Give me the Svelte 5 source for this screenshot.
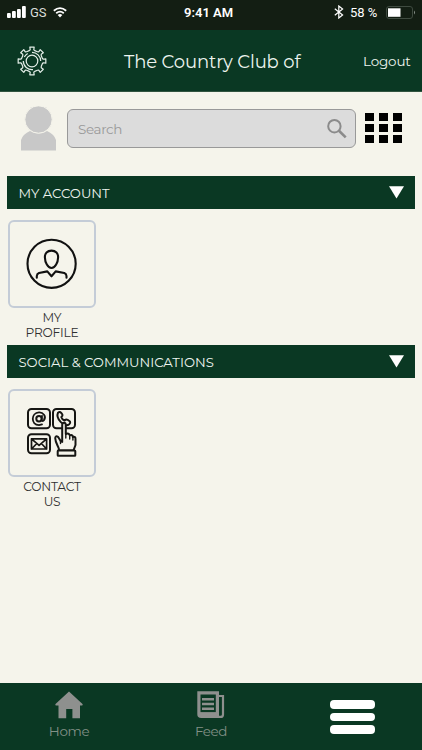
<script>
    let search = $state("");

    const sections = [
        { title: "MY ACCOUNT", item: ["MY", "PROFILE"], icon: "profile" },
        { title: "SOCIAL & COMMUNICATIONS", item: ["CONTACT", "US"], icon: "contact" }
    ];

    // outline of the gear: eight teeth around the centre
    function gearPath() {
        const points = [];
        for (let i = 0; i < 8; i++) {
            const mid = i * 45;
            for (const [offset, r] of [[-15, 10.7], [-9, 11.4], [-9, 14], [9, 14], [9, 11.4], [15, 10.7]]) {
                const a = ((mid + offset) * Math.PI) / 180;
                points.push((15 + r * Math.cos(a)).toFixed(2) + " " + (15 + r * Math.sin(a)).toFixed(2));
            }
        }
        return "M" + points.join("L") + "Z";
    }
</script>

<div class="app">
    <div class="status">
        <svg class="signal" width="19" height="12" viewBox="0 0 19 12" fill="#fff">
            <rect x="0" y="7" width="3.8" height="5" rx="1" />
            <rect x="5" y="5" width="3.8" height="7" rx="1" />
            <rect x="10" y="3" width="3.8" height="9" rx="1" />
            <rect x="15" y="0" width="3.8" height="12" rx="1" />
        </svg>
        <span class="carrier">GS</span>
        <svg class="wifi" width="14" height="11" viewBox="0 0 14 11" fill="none" stroke="#fff" stroke-width="1.8">
            <path d="M.8 3.7Q7 -1.5 13.2 3.7M3.2 6.2Q7 3 10.8 6.2" />
            <path d="M4.7 7.9Q7 6.2 9.3 7.9L7 10.5Z" fill="#fff" stroke="none" />
        </svg>
        <span class="time">9:41 AM</span>
        <svg class="bluetooth" width="10" height="14" viewBox="0 0 10 14" fill="none" stroke="#fff" stroke-width="1.2">
            <path d="M.8 3.8L8.6 10L4.8 13V1L8.6 4L.8 10.2" />
        </svg>
        <span class="percent">58 %</span>
        <svg class="battery" width="30" height="13" viewBox="0 0 30 13">
            <rect x=".5" y=".5" width="26" height="12" rx="2.5" fill="none" stroke="#3f4b40" />
            <rect x="2" y="2.3" width="12.5" height="8.5" fill="#fff" />
            <path d="M28 4.5Q30 6.5 28 8.5Z" fill="#89918a" />
        </svg>
    </div>

    <header>
        <svg class="gear" width="30" height="30" viewBox="0 0 30 30" fill="none" stroke="#e4eee8" stroke-width="1.2" stroke-linejoin="round">
            <path d={gearPath()} />
            <circle cx="15" cy="15" r="5.8" />
            <path d="M15 6.3A8.7 8.7 0 0 1 23.7 15M6.3 15A8.7 8.7 0 0 0 16 23.6M7.3 11A8.7 8.7 0 0 1 10.7 7.4" />
        </svg>
        <h1>The Country Club of</h1>
        <span class="logout">Logout</span>
    </header>

    <main>
        <div class="tools">
            <svg class="avatar" width="36" height="45" viewBox="0 0 36 45" fill="#c8c8c8">
                <path d="M0 44.5V34Q2 28 9 25Q18 30 26 25Q33 28 35 34V44.5Z" />
                <circle cx="17.5" cy="13.5" r="13.7" stroke="#f5f4eb" stroke-width="1" />
            </svg>
            <div class="search">
                <input bind:value={search} placeholder="Search" type="text">
                <svg width="20" height="20" viewBox="0 0 20 20" fill="none" stroke="#8b8b8b">
                    <circle cx="7.4" cy="7.2" r="6.2" stroke-width="2" />
                    <path d="M12 11.8L18.7 18.4" stroke-width="2.6" />
                </svg>
            </div>
            <div class="grid">
                {#each Array(9) as _}
                    <i></i>
                {/each}
            </div>
        </div>

        {#each sections as section}
            <section>
                <div class="bar">
                    <h2>{section.title}</h2>
                    <svg width="15" height="13" viewBox="0 0 15 13"><path d="M0 .2H15L7.5 12.5Z" fill="#fff" /></svg>
                </div>
                <div class="item">
                    <div class="tile">
                        {#if section.icon === "profile"}
                            <svg width="52" height="52" viewBox="0 0 52 52" fill="none" stroke="#111" stroke-width="2.1" stroke-linejoin="round" stroke-linecap="round">
                                <circle cx="25.6" cy="25.8" r="24.1" />
                                <path d="M25.5 12.6C29.7 12.6 32.3 15.3 32.1 19.4C32 24.4 29.2 30 25.5 30S19 24.4 18.9 19.4C18.7 15.3 21.3 12.6 25.5 12.6Z" />
                                <path d="M10.8 39.8V38Q10.9 35.8 13 35L21.3 33.4L25.5 38.3L29.7 33.4L38.3 35Q40.4 35.8 40.5 38V39.8" />
                            </svg>
                        {:else}
                            <svg width="50" height="50" viewBox="0 0 50 50" fill="none" stroke="#161613" stroke-width="2" stroke-linejoin="round" stroke-linecap="round">
                                <rect x="1" y="1" width="22" height="19.2" rx="3.5" />
                                <rect x="26" y="1" width="22" height="19.2" rx="3.5" />
                                <rect x="1" y="26.3" width="22" height="19" rx="3.5" />
                                <circle cx="12" cy="10.7" r="2.7" />
                                <path d="M15 7.8L14.6 11.5Q15 14 16.8 12.4C20 8 15.8 4.2 12 4.4C3.8 5 3.6 16.8 12 17.1L15 16.4" stroke-width="1.8" />
                                <path d="M31 4.7Q32.8 3.3 34.2 4.9L35.4 6.5Q36 8 34.3 9.1Q34.8 11.3 37.6 12.5Q39 11 40.6 11.8L43 13.5Q43.7 15 42.3 16.2C37.5 19.8 28.3 10.8 31 4.7Z" />
                                <path d="M4.5 30.8H19.6V41H4.5ZM4.5 30.8L12.1 37.3L19.6 30.8M4.5 41L9.8 35.5M19.6 41L14.4 35.5" stroke-width="1.7" />
                                <path d="M31.8 42.6V40.5C30.6 37 28.4 34.5 28.2 30Q28.5 27.2 31 28.8L33.5 32.8L35.2 34V17Q35.3 14.7 37 14.7T38.8 17V26Q42 24.8 42.7 27.3Q45.4 26 45.9 29Q48.6 28.3 48.5 31V37L46.4 42.6Z" fill="#f5f4eb" />
                                <path d="M38.8 26V30M42.7 27.3V31M45.9 29V32M33.5 32.8V35.5" stroke-width="1.4" />
                                <rect x="30.7" y="42.6" width="17.6" height="5.2" rx=".6" fill="#f5f4eb" />
                            </svg>
                        {/if}
                    </div>
                    <p class={section.icon}>{section.item[0]}<br>{section.item[1]}</p>
                </div>
            </section>
        {/each}
    </main>

    <nav>
        <div class="tab home">
            <svg width="28" height="28" viewBox="0 0 28 28" fill="#8e908e">
                <path d="M14 .5L27.5 13Q28.2 14.5 26 14.5H25V27.3H17.4V18H11.2V27.3H3.5V14.5H2Q-.2 14.5 .5 13Z" />
            </svg>
            <span>Home</span>
        </div>
        <div class="tab feed">
            <svg width="28" height="28" viewBox="0 0 28 28" fill="none" stroke="#8e908e">
                <path d="M1.9 1.9H20.4V25.4H4.2Q1.9 25.4 1.9 23.2Z" stroke-width="3.2" />
                <path d="M21 5H26V23.4Q26 25.9 23.6 25.9H19" stroke-width="2.2" />
                <path d="M5 8.2H17M5 13H17M5 17.8H17" stroke-width="2.4" />
                <path d="M3 22.6H20" stroke-width="3" />
            </svg>
            <span>Feed</span>
        </div>
        <div class="menu"><i></i><i></i><i></i></div>
    </nav>
</div>

<style>
    :global(body) {
        margin: 0;
        background: #f5f4eb;
    }

    .app {
        display: flex;
        flex-direction: column;
        width: 422px;
        height: 750px;
        background: #f5f4eb;
        font-family: Montserrat, Inter, sans-serif;
        overflow: hidden;
    }

    svg {
        display: block;
        flex: none;
    }

    h1, h2, p {
        margin: 0;
        font-weight: 400;
    }

    span, h1, h2 {
        white-space: nowrap;
    }

    .status {
        display: flex;
        height: 30px;
        box-sizing: border-box;
        padding: 0 6px 6px 7px;
        align-items: center;
        background: #131e13;
        color: #fff;
        font: 13px Roboto, sans-serif;
    }

    .carrier {
        width: 24px;
        margin-left: 4px;
        margin-right: -1px;
        color: #d9ddd9;
    }

    .time {
        width: 150px;
        margin-left: 117px;
        font-weight: 600;
    }

    .percent {
        width: 30px;
        margin-left: 6px;
    }

    .battery {
        margin-left: 6px;
    }

    header {
        display: flex;
        height: 62px;
        box-sizing: border-box;
        padding: 1px 11px 0 17px;
        align-items: center;
        background: #0a3823;
        color: #edf4ef;
        border-bottom: 1px solid #31543f;
    }

    h1 {
        width: 239px;
        margin-left: 77px;
        padding-top: 1px;
        font-size: 18px;
        letter-spacing: -0.13px;
    }

    .logout {
        margin-left: 0;
        font-size: 13.5px;
        letter-spacing: -0.15px;
    }

    main {
        flex: 1;
        padding: 0 7px;
    }

    .tools {
        display: flex;
        height: 84px;
        box-sizing: border-box;
        padding: 14px 0 0 14px;
    }

    .search {
        display: flex;
        width: 289px;
        height: 39px;
        box-sizing: border-box;
        margin: 3px 9px 0 10px;
        padding: 0 8px 0 10px;
        align-items: center;
        border: 1px solid #999;
        border-radius: 6px;
        background: #dcdcdc;
    }

    .search input {
        flex: 1;
        min-width: 0;
        padding: 0;
        border: 0;
        outline: 0;
        background: none;
        font: 13.5px Montserrat, Inter, sans-serif;
        letter-spacing: -0.35px;
    }

    .search input::placeholder {
        color: #999;
    }

    .grid {
        display: grid;
        grid-template-columns: repeat(3, 9px);
        grid-template-rows: repeat(3, 8px);
        gap: 3px 5px;
        margin-top: 7px;
        align-content: start;
    }

    .grid i {
        background: #000;
    }

    section {
        height: 169px;
    }

    .bar {
        display: flex;
        height: 33px;
        padding: 0 11.5px;
        align-items: center;
        justify-content: space-between;
        background: #0a3823;
        color: #edf4ef;
    }

    h2 {
        font-size: 13.2px;
    }

    .item {
        width: 88px;
        margin-left: 1px;
        padding-top: 11px;
    }

    .tile {
        display: flex;
        height: 88px;
        box-sizing: border-box;
        align-items: center;
        justify-content: center;
        border: 2px solid #c4ccd7;
        border-radius: 6px;
    }

    p {
        padding-top: 3px;
        color: #303030;
        font-size: 12.2px;
        letter-spacing: -0.2px;
        line-height: 14.5px;
        text-align: center;
    }

    nav {
        display: flex;
        height: 67px;
        background: #0a3823;
    }

    .tab {
        display: flex;
        width: 138px;
        padding-top: 8px;
        flex-direction: column;
        align-items: center;
        color: #829087;
        font-size: 13.5px;
        letter-spacing: -0.4px;
    }

    .tab span {
        margin-top: 4px;
        line-height: 16px;
    }

    .feed {
        width: 146px;
    }

    .menu {
        display: flex;
        width: 45px;
        margin-left: 46px;
        padding-top: 17px;
        flex-direction: column;
        gap: 4px;
    }

    .menu i {
        height: 8.5px;
        border-radius: 4px;
        background: #fff;
    }
</style>
